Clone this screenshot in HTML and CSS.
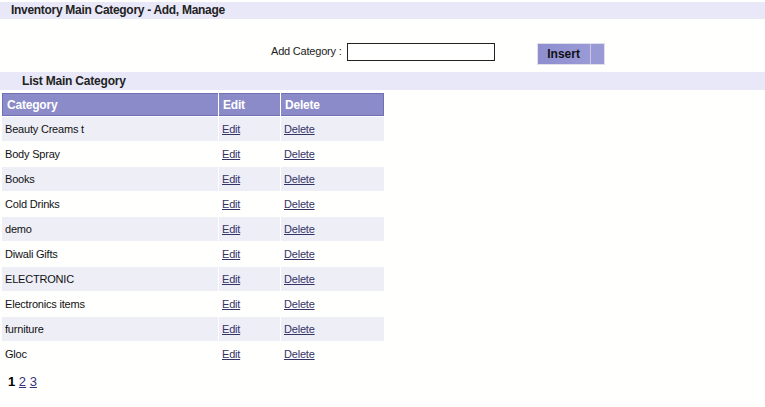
FILE: index.html
```html
<!DOCTYPE html>
<html>
<head>
<meta charset="utf-8">
<link rel="stylesheet" href="styles.css">
</head>
<body>
<div class="titlebar">Inventory Main Category - Add, Manage</div>
<div class="addrow">
  <label class="addlabel">Add Category :</label>
  <input class="addinput" type="text">
  <button class="insert">Insert</button>
</div>
<div class="listbar">List Main Category</div>
<table class="grid">
  <thead>
    <tr><th class="c1">Category</th><th class="c2">Edit</th><th class="c3">Delete</th></tr>
  </thead>
  <tbody>
    <tr class="alt"><td>Beauty Creams t</td><td><a href="#">Edit</a></td><td><a href="#">Delete</a></td></tr>
    <tr><td>Body Spray</td><td><a href="#">Edit</a></td><td><a href="#">Delete</a></td></tr>
    <tr class="alt"><td>Books</td><td><a href="#">Edit</a></td><td><a href="#">Delete</a></td></tr>
    <tr><td>Cold Drinks</td><td><a href="#">Edit</a></td><td><a href="#">Delete</a></td></tr>
    <tr class="alt"><td>demo</td><td><a href="#">Edit</a></td><td><a href="#">Delete</a></td></tr>
    <tr><td>Diwali Gifts</td><td><a href="#">Edit</a></td><td><a href="#">Delete</a></td></tr>
    <tr class="alt"><td>ELECTRONIC</td><td><a href="#">Edit</a></td><td><a href="#">Delete</a></td></tr>
    <tr><td>Electronics items</td><td><a href="#">Edit</a></td><td><a href="#">Delete</a></td></tr>
    <tr class="alt"><td>furniture</td><td><a href="#">Edit</a></td><td><a href="#">Delete</a></td></tr>
    <tr><td>Gloc</td><td><a href="#">Edit</a></td><td><a href="#">Delete</a></td></tr>
  </tbody>
</table>
<div class="pager"><span class="cur">1</span> <a href="#">2</a> <a href="#">3</a></div>
</body>
</html>
```
FILE: styles.css
```css
html, body {
  margin: 0;
  padding: 0;
  background: #fffffe;
  font-family: "Liberation Sans", Arial, sans-serif;
  color: #000;
}
body {
  padding-top: 2px;
}
.titlebar {
  height: 17px;
  line-height: 17px;
  background: #e8e8f8;
  font-weight: bold;
  font-size: 12px;
  letter-spacing: -0.3px;
  padding-left: 11px;
  color: #222;
}
.addrow {
  display: flex;
  align-items: flex-start;
  height: 53px;
  padding-top: 24px;
  box-sizing: border-box;
}
.addlabel {
  font-size: 11px;
  letter-spacing: -0.2px;
  margin-left: 271px;
  margin-top: 2px;
  color: #222;
}
.addinput {
  margin: 0 0 0 5px;
  width: 148px;
  height: 18px;
  box-sizing: border-box;
  border: 1px solid #222;
  padding: 0;
  background: #fff;
}
.insert {
  margin-left: 42px;
  width: 68px;
  height: 22px;
  border: 1px solid #e0e0ea;
  background: linear-gradient(to right, #8e8ed0 0, #9a9ad6 52px, #c8c8e0 52px, #c8c8e0 53px, #9999d6 53px);
  font-family: "Liberation Sans", Arial, sans-serif;
  font-weight: bold;
  font-size: 12px;
  color: #111;
  padding: 0 14px 0 0;
}
.listbar {
  height: 18px;
  line-height: 18px;
  background: #e8e8f8;
  font-weight: bold;
  font-size: 12px;
  letter-spacing: -0.2px;
  padding-left: 22px;
  color: #222;
}
.grid {
  margin: 2px 0 0 1px;
  border-collapse: separate;
  border-spacing: 1px;
  width: 384px;
  font-size: 11px;
  letter-spacing: -0.2px;
}
.grid th {
  background: #8b8bc9;
  color: #fff;
  text-align: left;
  font-size: 12px;
  height: 21px;
  padding: 0 0 0 4px;
  border-top: 1px solid #7070b4;
  border-bottom: 1px solid #7070b4;
}
.grid th.c1 { width: 211px; border-left: 1px solid #7070b4; }
.grid th.c2 { width: 57px; }
.grid th.c3 { width: 98px; border-right: 1px solid #7070b4; }
.grid td {
  height: 24px;
  padding: 0 0 0 3px;
  color: #111;
}
.grid tr.alt td {
  background: #eeeef7;
}
.grid a {
  color: #333366;
}
.pager {
  margin: 7px 0 0 8px;
  font-size: 13px;
}
.pager .cur {
  font-weight: bold;
}
.pager a {
  color: #333377;
}
```
